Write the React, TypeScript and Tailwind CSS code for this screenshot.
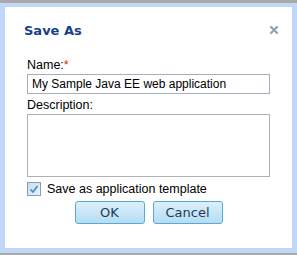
import React from "react";

export default function App() {
  return (
    <div className="w-[297px] h-[255px] bg-[#a9a9a9] pt-[3px] overflow-hidden">
      <div className="h-[250px] bg-[#c2d6f8] pt-[4px] pl-[5px] pr-[5px] pb-[5px]">
        <div className="h-[241px] bg-white flex flex-col" style={{ fontFamily: '"Liberation Sans", Arial, sans-serif' }}>
          <div className="flex items-start justify-between h-[43px] pt-[16px] pl-[19px] pr-[12px]">
            <span
              className="text-[13px] font-bold text-[#15428b] leading-[16px]"
              style={{ fontFamily: '"DejaVu Sans", Verdana, sans-serif' }}
            >
              Save As
            </span>
            <svg width="8" height="8" viewBox="0 0 8 8" className="mt-[3px] mr-[2px]">
              <path d="M1 1 L7 7 M7 1 L1 7" stroke="#8fa3bb" strokeWidth="2.2" strokeLinecap="square" />
            </svg>
          </div>
          <div className="pl-[22px] pr-[22px] flex flex-col">
            <div className="text-[12.5px] leading-[15px] text-black h-[24px] pt-[8px]">
              Name:<span className="text-[#e02020]">*</span>
            </div>
            <div className="h-[20px] w-[243px] border border-[#a8b0c0] flex items-center pl-[4px] text-[12px] text-black">
              My Sample Java EE web application
            </div>
            <div className="text-[12.5px] leading-[15px] text-black h-[20px] pt-[4px]">
              Description:
            </div>
            <div className="h-[63px] w-[243px] border border-[#b0b0b0] bg-white" />
            <div className="flex items-center mt-[6px] h-[12px] gap-[6px]">
              <div className="w-[14px] h-[14px] border border-[#8c9cb2] bg-gradient-to-br from-[#c8dcf0] to-[#e8f2fc] flex items-center justify-center">
                <svg width="10" height="10" viewBox="0 0 10 10">
                  <path d="M1.5 5.5 L4 8 L8.5 2" stroke="#4f86c8" strokeWidth="1.7" fill="none" />
                </svg>
              </div>
              <span className="text-[12.5px] text-black leading-[15px]">Save as application template</span>
            </div>
            <div className="flex justify-center gap-[8px] mt-[6px]">
              <button
                className="w-[70px] h-[23px] rounded-[3px] border border-[#5aa8d4] bg-gradient-to-b from-[#dcf0fb] to-[#b4dcf2] text-[13px] text-[#1e3c5a]"
                style={{ fontFamily: '"DejaVu Sans", Verdana, sans-serif' }}
              >
                OK
              </button>
              <button
                className="w-[70px] h-[23px] rounded-[3px] border border-[#5aa8d4] bg-gradient-to-b from-[#dcf0fb] to-[#b4dcf2] text-[13px] text-[#1e3c5a]"
                style={{ fontFamily: '"DejaVu Sans", Verdana, sans-serif' }}
              >
                Cancel
              </button>
            </div>
          </div>
        </div>
      </div>
    </div>
  );
}
